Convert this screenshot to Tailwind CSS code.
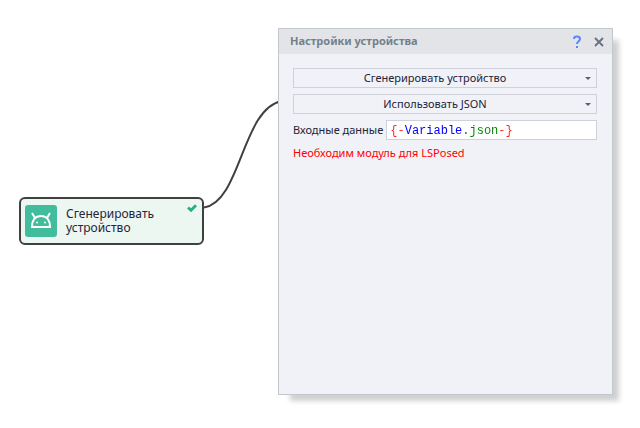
<!DOCTYPE html>
<html lang="ru">
  <head>
    <meta charset="UTF-8" />
    <meta name="viewport" content="width=device-width, initial-scale=1.0" />
    <script src="https://cdn.jsdelivr.net/npm/@tailwindcss/browser@4"></script>
    <title>Настройки устройства</title>
  </head>
  <body class="relative min-h-screen bg-white font-['Noto_Sans',sans-serif] text-[11px] text-[#24243a]">
    <!-- connector between the node and its settings -->
    <svg class="absolute left-0 top-0" width="290" height="220" fill="none" aria-hidden="true">
      <path d="M204 207.500C241 202 242 108 282 101" stroke="#404040" stroke-width="2" />
    </svg>

    <!-- action node -->
    <div class="absolute left-[19px] top-[197px] flex h-12 w-[185px] items-center gap-[9px] rounded-md border-2 border-[#404040] bg-[#edf7f2] pl-1">
      <svg class="shrink-0" width="32" height="32" viewBox="0 0 32 32" fill="none" aria-hidden="true">
        <rect width="32" height="32" rx="3" fill="#41bd9d" />
        <path d="M7 22C7 15 10.500 11 16 11S25 15 25 22Z" stroke="#fff" stroke-width="2" />
        <path d="M7 8L10 13M25 8L22 13" stroke="#fff" stroke-width="2" />
        <circle cx="12" cy="17.500" r="1" fill="#fff" />
        <circle cx="20" cy="17.500" r="1" fill="#fff" />
      </svg>
      <p class="text-[12px] leading-[14px]">Сгенерировать<br />устройство</p>
      <svg class="absolute right-[5px] top-[5px]" width="10" height="8" viewBox="0 0 10 8" fill="none" aria-hidden="true">
        <path d="M1 3.500L4 6.300L9 1.200" stroke="#25b08a" stroke-width="2.800" />
      </svg>
    </div>

    <!-- settings window -->
    <section class="absolute left-[278px] top-7 flex min-h-[367px] w-[335px] flex-col border border-[#c3c7ce] bg-[#f0f2f7] shadow-[9px_9px_5px_-3px_#00000030]">
      <header class="flex h-[25px] items-center bg-[#e3e4e8] pl-[11px] pr-2">
        <h1 class="flex-1 text-[11px] font-bold text-[#72808b]">Настройки устройства</h1>
        <button type="button" aria-label="Справка" class="mr-3 flex">
          <svg width="10" height="14" viewBox="0 0 10 14" fill="none">
            <path d="M2 4C2 0.800 8 0.800 8 4C8 6.300 5 6.200 5 9" stroke="#5588f5" stroke-width="2" />
            <path d="M4 11h2v2H4z" fill="#5588f5" />
          </svg>
        </button>
        <button type="button" aria-label="Закрыть" class="flex">
          <svg width="10" height="10" viewBox="0 0 10 10" fill="none">
            <path d="M1 1L9 9M9 1L1 9" stroke="#66717e" stroke-width="1.800" />
          </svg>
        </button>
      </header>
      <form class="flex flex-col gap-[6px] pl-[14px] pr-[15px] pt-[14px]">
        <div class="relative">
          <select aria-label="Действие" class="block h-5 w-full appearance-none border border-[#ced1d9] bg-transparent pr-5 text-center [text-align-last:center]">
            <option>Сгенерировать устройство</option>
          </select>
          <svg class="pointer-events-none absolute right-[6px] top-[9px]" width="6" height="3" aria-hidden="true">
            <path d="M0 0h6L3 3z" fill="#59616b" />
          </svg>
        </div>
        <div class="relative">
          <select aria-label="Источник" class="block h-5 w-full appearance-none border border-[#ced1d9] bg-transparent pr-5 text-center [text-align-last:center]">
            <option>Использовать JSON</option>
          </select>
          <svg class="pointer-events-none absolute right-[6px] top-[9px]" width="6" height="3" aria-hidden="true">
            <path d="M0 0h6L3 3z" fill="#59616b" />
          </svg>
        </div>
        <div class="flex items-center gap-[3px]">
          <label for="inputData" class="whitespace-nowrap">Входные данные</label>
          <div class="h-5 min-w-0 flex-1 border border-[#ced1d9] bg-white px-[3px] pt-[2px]">
            <!-- braces, scope and variable name get their own colours -->
            <input
              id="inputData"
              type="text"
              value="{-Variable.json-}"
              class="block h-full w-full bg-[linear-gradient(90deg,#ff2020_2ch,#0000ff_2ch_10ch,#008000_10ch_15ch,#ff2020_15ch)] bg-clip-text font-['Liberation_Mono',monospace] text-[12px] text-transparent caret-black outline-none"
            />
          </div>
        </div>
        <p class="leading-[14px] text-[#ff0000]">Необходим модуль для LSPosed</p>
      </form>
    </section>
  </body>
</html>
